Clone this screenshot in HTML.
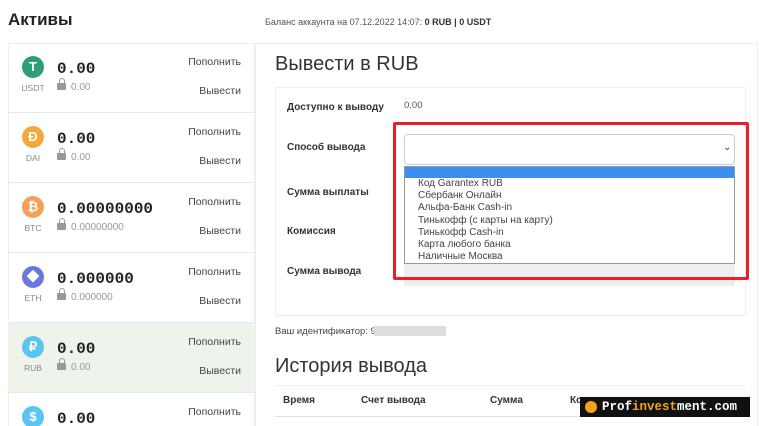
<!DOCTYPE html>
<html style="width:760px;height:426px;overflow:hidden"><head><meta charset="utf-8"><style>
*{box-sizing:border-box;margin:0;padding:0}
body{width:760px;height:426px;overflow:hidden;background:#fff;font-family:"Liberation Sans","Noto Sans CJK SC",sans-serif;color:#333;position:relative}
.a{position:absolute}
.row{position:absolute;left:8px;width:247px;height:70px;border-bottom:1px solid #e8e8e8;overflow:hidden}
.ic{position:absolute;left:14px;top:13px;width:22px;height:22px;border-radius:50%;color:#fff;font-size:13px;font-weight:bold;text-align:center;line-height:22px}
.tk{position:absolute;left:0;width:50px;top:40px;text-align:center;font-size:8.5px;color:#888}
.amt{position:absolute;left:49px;top:17px;font-family:"Liberation Mono",monospace;font-weight:bold;font-size:16px;color:#222}
.lk{position:absolute;left:49px;top:39px;font-size:10px;color:#999}
.lk i{display:inline-block;width:9px;height:7px;background:#999;border-radius:1px;margin-right:5px;position:relative;top:0}
.lk i:before{content:"";position:absolute;left:1.5px;top:-5px;width:6px;height:6px;border:1.5px solid #999;border-bottom:none;border-radius:3px 3px 0 0;box-sizing:border-box}
.p{position:absolute;right:14px;top:13px;font-size:10.5px;color:#444}
.v{position:absolute;right:14px;top:42px;font-size:10.5px;color:#444}
.lb{position:absolute;left:287px;font-size:10px;font-weight:bold;color:#333}
.op{font-size:10px;color:#444;padding-left:13px;height:12.2px;line-height:12px}
</style></head><body>
<div class="a" style="left:8px;top:10px;font-size:17px;font-weight:bold;color:#222">Активы</div>
<div class="a" style="left:265px;top:17px;font-size:9px;color:#555">Баланс аккаунта на 07.12.2022 14:07: <b style="color:#333">0 RUB | 0 USDT</b></div>
<div class="a" style="left:8px;top:43px;width:247px;height:383px;border:1px solid #eee;border-bottom:none"></div>
<div class="row" style="top:43px"><div class="ic" style="background:#2f9e73">T</div><div class="tk">USDT</div><div class="amt">0.00</div><div class="lk"><i></i>0.00</div><div class="p">Пополнить</div><div class="v">Вывести</div></div>
<div class="row" style="top:113px"><div class="ic" style="background:#f2a93b">Ð</div><div class="tk">DAI</div><div class="amt">0.00</div><div class="lk"><i></i>0.00</div><div class="p">Пополнить</div><div class="v">Вывести</div></div>
<div class="row" style="top:183px"><div class="ic" style="background:#f5a05a">₿</div><div class="tk">BTC</div><div class="amt">0.00000000</div><div class="lk"><i></i>0.00000000</div><div class="p">Пополнить</div><div class="v">Вывести</div></div>
<div class="row" style="top:253px"><div class="ic" style="background:#6a78dd">◆</div><div class="tk">ETH</div><div class="amt">0.000000</div><div class="lk"><i></i>0.000000</div><div class="p">Пополнить</div><div class="v">Вывести</div></div>
<div class="row" style="top:323px;background:#eef3ec"><div class="ic" style="background:#5ac4f2">₽</div><div class="tk">RUB</div><div class="amt">0.00</div><div class="lk"><i></i>0.00</div><div class="p">Пополнить</div><div class="v">Вывести</div></div>
<div class="row" style="top:393px;height:33px;border-bottom:none"><div class="ic" style="background:#5ac4f2">$</div><div class="amt">0.00</div><div class="p">Пополнить</div></div>
<div class="a" style="left:255px;top:43px;width:503px;height:383px;border:1px solid #eee;border-bottom:none"></div>
<div class="a" style="left:275px;top:53px;font-size:20px;color:#333">Вывести в RUB</div>
<div class="a" style="left:275px;top:87px;width:471px;height:229px;border:1px solid #eee"></div>
<div class="lb" style="top:102px">Доступно к выводу</div>
<div class="a" style="left:404px;top:100px;font-size:9.5px;color:#555">0.00</div>
<div class="lb" style="top:142px">Способ вывода</div>
<div class="lb" style="top:187px">Сумма выплаты</div>
<div class="lb" style="top:226px">Комиссия</div>
<div class="lb" style="top:266px">Сумма вывода</div>
<div class="a" style="left:404px;top:263px;width:331px;height:23px;background:#eee;border-radius:3px"></div>
<div class="a" style="left:404px;top:134px;width:331px;height:31px;border:1px solid #ccc;border-radius:4px"></div>
<div class="a" style="left:723px;top:142px;font-size:10px;color:#444">⌄</div>
<div class="a" style="left:404px;top:166px;width:331px;height:98px;border:1px solid #999;background:#fff">
<div style="height:11px;background:#3b8ff0"></div>
<div class="op">Код Garantex RUB</div><div class="op">Сбербанк Онлайн</div><div class="op">Альфа-Банк Cash-in</div><div class="op">Тинькофф (с карты на карту)</div><div class="op">Тинькофф Cash-in</div><div class="op">Карта любого банка</div><div class="op">Наличные Москва</div>
</div>
<div class="a" style="left:393px;top:122px;width:356px;height:158px;border:3px solid #e8202a;border-radius:2px"></div>
<div class="a" style="left:275px;top:326px;font-size:9.5px;color:#444">Ваш идентификатор: 9</div>
<div class="a" style="left:374px;top:326px;width:72px;height:10px;background:#ddd"></div>
<div class="a" style="left:275px;top:355px;font-size:20px;color:#333">История вывода</div>
<div class="a" style="left:275px;top:385px;width:471px;border-top:1px solid #eee"></div>
<div class="a" style="left:275px;top:416px;width:471px;border-top:1px solid #e0e0e0"></div>
<div class="a" style="left:283px;top:395px;font-size:10px;font-weight:bold">Время</div>
<div class="a" style="left:361px;top:395px;font-size:10px;font-weight:bold">Счет вывода</div>
<div class="a" style="left:490px;top:395px;font-size:10px;font-weight:bold">Сумма</div>
<div class="a" style="left:570px;top:395px;font-size:10px;font-weight:bold">Ко</div>
<div class="a" style="left:580px;top:397px;width:170px;height:20px;background:#111;color:#fff;font-family:'Liberation Mono',monospace;font-weight:bold;font-size:12.5px;line-height:20px;padding-left:22px;overflow:hidden;white-space:nowrap">Prof<span style="color:#f2a31b">invest</span>ment.com</div>
<div class="a" style="left:585px;top:401px;width:12px;height:12px;border-radius:50%;background:#f2a31b"></div>
</body></html>
